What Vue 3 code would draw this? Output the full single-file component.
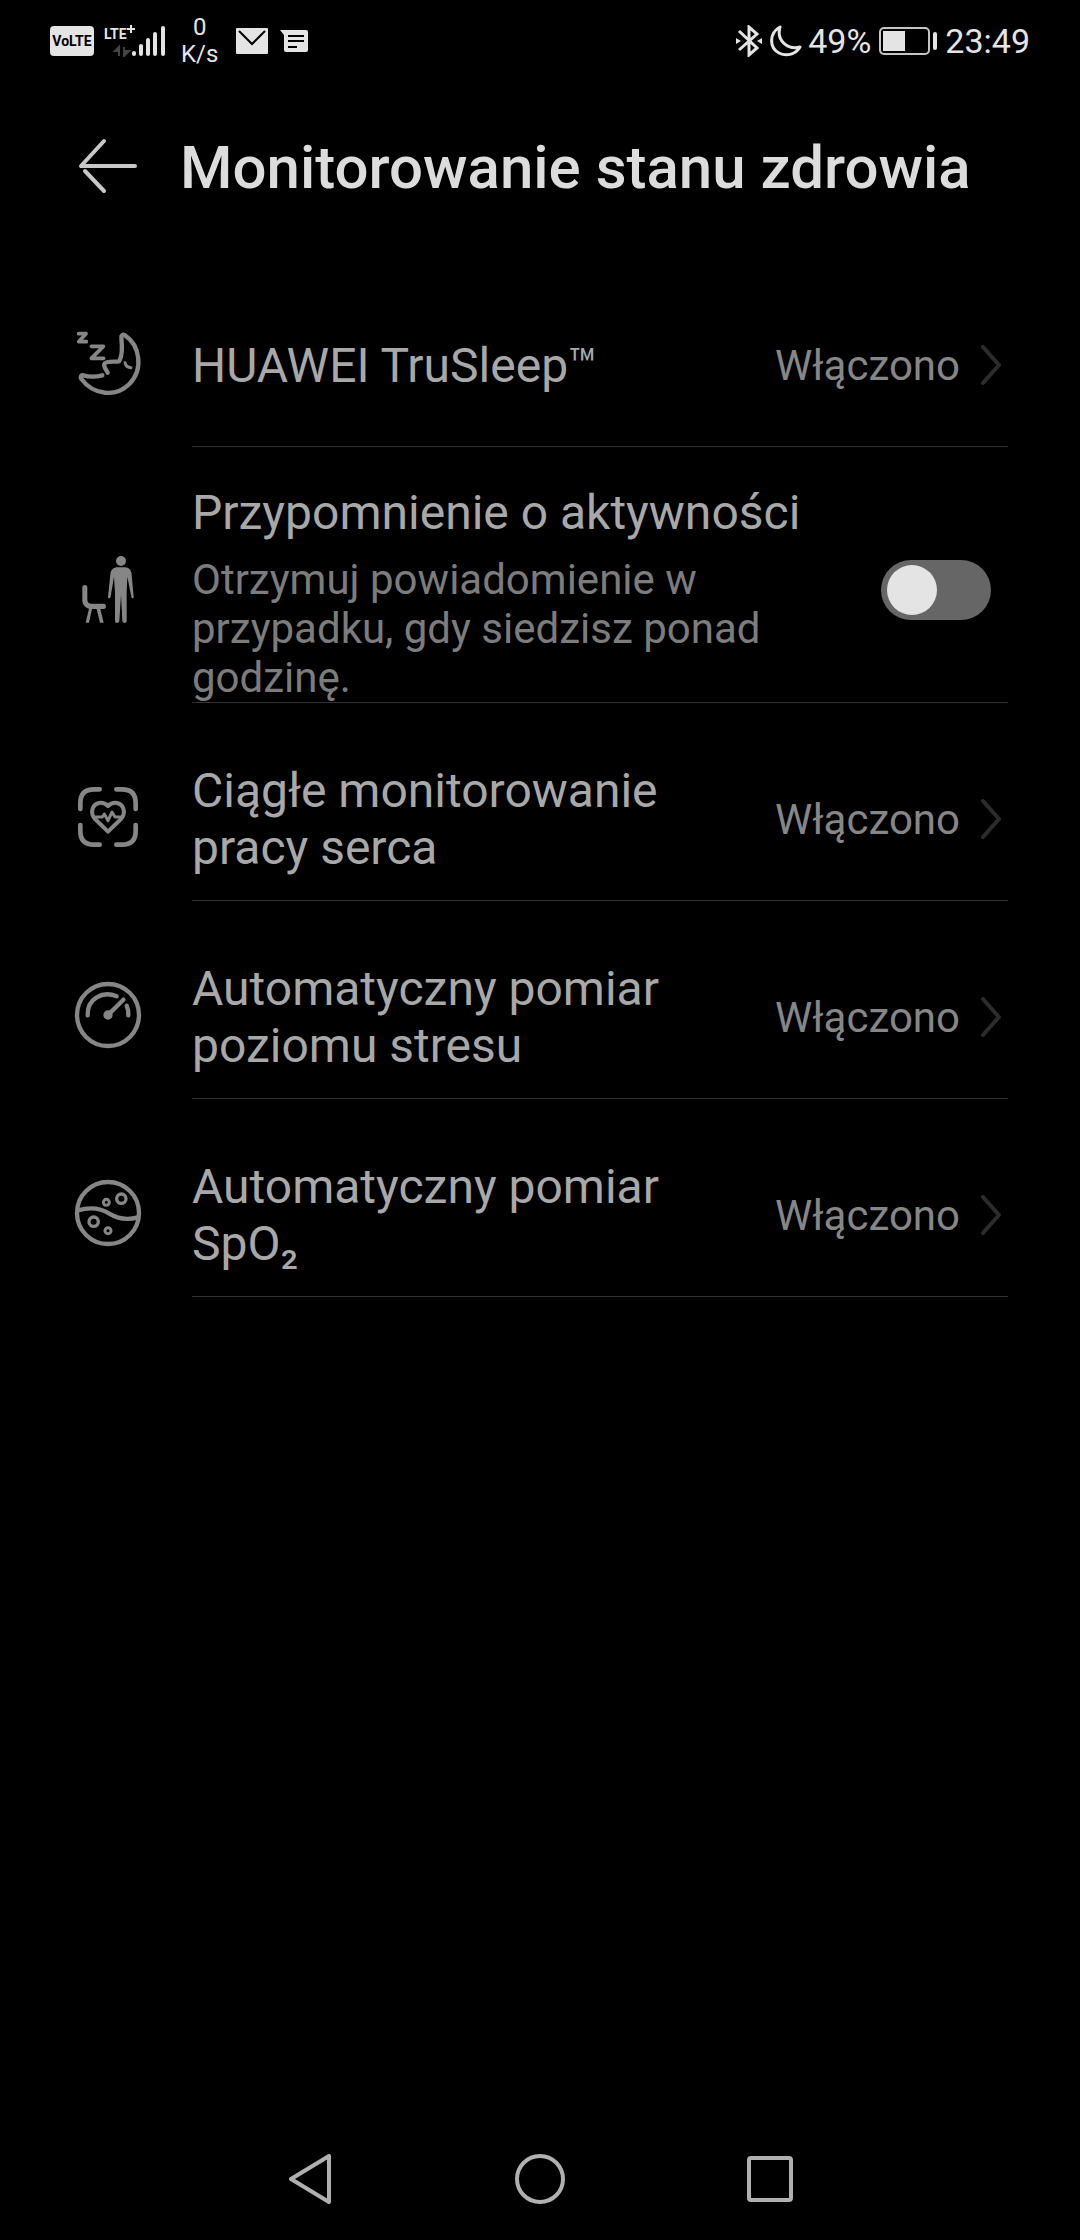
<script setup>
import { ref } from 'vue'

const activityReminder = ref(false)

const monitors = [
  { id: 'heart', title: 'Ciągłe monitorowanie pracy serca' },
  { id: 'stress', title: 'Automatyczny pomiar poziomu stresu' },
  { id: 'spo2', title: 'Automatyczny pomiar SpO₂' },
]
</script>

<template>
  <div class="screen">
    <div class="status">
      <div class="status-left">
        <span class="volte">VoLTE</span>
        <div class="signal">
          <span class="lte">LTE</span>
          <svg width="62" height="32" viewBox="0 0 62 32">
            <path d="M23 4h8M27 0v8" stroke="#e4e4e4" stroke-width="2" />
            <path d="M15 31V22l-4 4h4M20 22v9l5-5h-5" stroke="#444" stroke-width="2" fill="#444" />
            <path d="M30 28v1M37 21v8M44 15v14M51 9v20M59 3v26" stroke="#e4e4e4" stroke-width="4" stroke-linecap="round" />
          </svg>
        </div>
        <div class="speed"><span>0</span><span>K/s</span></div>
        <svg class="mail" width="32" height="26" viewBox="0 0 32 26">
          <rect width="32" height="26" rx="1" fill="#e4e4e4" />
          <path d="M3 3l13 13L29 3" fill="none" stroke="#000" stroke-width="2" />
        </svg>
        <svg width="28" height="22" viewBox="0 0 28 22">
          <path d="M0 0h26q2 0 2 2v18q0 2-2 2H6q-2 0-2-2V5z" fill="#e4e4e4" />
          <path d="M8 6h16M8 11h16M8 17h9" stroke="#000" stroke-width="2" />
        </svg>
      </div>
      <div class="status-right">
        <svg width="26" height="32" viewBox="0 0 26 32">
          <path d="M3 6l18 17-8 7V2l8 7L3 25" fill="none" stroke="#e4e4e4" stroke-width="3" />
          <path d="M0 13l5 3-5 3zM26 13l-5 3 5 3z" fill="#e4e4e4" />
        </svg>
        <svg class="moon" width="32" height="32" viewBox="0 0 32 32">
          <path d="M10 2C-1 8-1 23 9 28c8 4 17 1 21-6C18 25 6 16 10 2z" fill="none" stroke="#e4e4e4" stroke-width="3" stroke-linejoin="round" />
        </svg>
        <span>49%</span>
        <svg class="battery" width="58" height="28" viewBox="0 0 58 28">
          <rect x="1" y="1" width="49" height="26" rx="4" fill="none" stroke="#c4c4c4" stroke-width="2" />
          <rect x="4" y="4" width="22" height="20" fill="#e4e4e4" />
          <rect x="54" y="5" width="4" height="18" rx="2" fill="#e4e4e4" />
        </svg>
        <span>23:49</span>
      </div>
    </div>

    <header class="header">
      <button class="back" type="button" aria-label="Wstecz">
        <svg width="60" height="56" viewBox="0 0 60 56" fill="none" stroke="#c8c8c8" stroke-width="4" stroke-linecap="round">
          <path d="M26 3L3 28h54" stroke-linejoin="round" />
          <path d="M7 33l19 20" />
        </svg>
      </button>
      <h1>Monitorowanie stanu zdrowia</h1>
    </header>

    <main class="list">
      <button class="row" type="button">
        <svg class="icon" viewBox="36 24 216 216">
          <path d="M56 41h22L56 65h23M94 79h36L94 115h37" stroke-width="11" />
          <path d="M127 166Q96 174 70 166c-7-2-10 5-6 11 38 50 104 55 144 15 44-44 31-117-13-146-6-4-12 0-11 7 3 28 2 56-6 70-6 5-38-2-44 8-6 7 4 16 9 27" stroke-width="13" />
          <path d="M195 128c2 9 8 15 18 15" stroke-width="9" />
        </svg>
        <span class="body">
          <span class="title">HUAWEI TruSleep™</span>
          <span class="value">Włączono</span>
          <svg class="chevron" viewBox="0 0 20 40"><path d="M2 2l16 18L2 38" /></svg>
        </span>
      </button>

      <label class="row reminder">
        <svg class="icon solid" viewBox="36 42 216 216">
          <circle cx="183" cy="63" r="15" />
          <path d="M174 82h18c15 0 22 8 23 22l6 66c0 6-6 6-7 0l-12-60-2 48v85c0 8-12 8-13 0l-4-78-5 78c-1 8-13 8-13 0v-85l-3-48-10 60c-1 6-8 6-8 0l7-66c1-14 8-22 23-22z" />
          <path d="M67 142c0-9 15-9 15 0v38q1 11 12 11h37c9 0 9 16 0 16h-10l10 41h-11l-10-41H96l-9 41H77l10-42c-13-4-20-13-20-27z" />
        </svg>
        <span class="body">
          <span class="text">
            <span class="title">Przypomnienie o aktywności</span>
            <span class="desc">Otrzymuj powiadomienie w przypadku, gdy siedzisz ponad godzinę.</span>
          </span>
          <input v-model="activityReminder" class="switch" type="checkbox" role="switch" />
        </span>
      </label>

      <button v-for="item in monitors" :key="item.id" class="row" type="button">
        <svg v-if="item.id === 'heart'" class="icon" viewBox="36 36 216 216">
          <path d="M61 117V99q0-41 41-41h17M169 58h17q41 0 41 41v18M227 165v18q0 41-41 41h-17M119 224h-17q-41 0-41-41v-18" stroke-width="14" />
          <path d="M144 185L105 147c-15-17-10-43 12-48 12-2 21 3 27 9 6-6 15-11 27-9 22 5 27 31 12 48z" stroke-width="12" />
          <path d="M101 141h26l6-9 11 20 12-26 9 15h22" stroke-width="9" />
        </svg>
        <svg v-else-if="item.id === 'stress'" class="icon" viewBox="36 30 216 216">
          <circle cx="144" cy="135" r="93" stroke-width="13" />
          <path d="M83 136c-2-50 45-75 87-57M200 107q6 14 5 29" stroke-width="13" />
          <path d="M144 135l46-46" stroke-width="13" />
          <circle cx="144" cy="135" r="8" stroke-width="12" />
        </svg>
        <svg v-else class="icon" viewBox="36 24 216 216">
          <circle cx="144" cy="129" r="93" stroke-width="13" />
          <path d="M54 121c35-10 65-9 94 10 28 17 54 20 86 11" stroke-width="13" />
          <circle cx="184" cy="86" r="14" stroke-width="10" />
          <circle cx="139" cy="97" r="9" stroke-width="9" />
          <circle cx="101" cy="155" r="14" stroke-width="10" />
          <circle cx="144" cy="182" r="9" stroke-width="9" />
        </svg>
        <span class="body">
          <span class="title">{{ item.title }}</span>
          <span class="value">Włączono</span>
          <svg class="chevron" viewBox="0 0 20 40"><path d="M2 2l16 18L2 38" /></svg>
        </span>
      </button>
    </main>

    <nav class="nav">
      <button type="button" aria-label="Wstecz">
        <svg width="44" height="50" viewBox="0 0 44 50"><path d="M41 2v46L3 25z" /></svg>
      </button>
      <button type="button" aria-label="Ekran główny">
        <svg width="50" height="50" viewBox="0 0 50 50"><circle cx="25" cy="25" r="23" /></svg>
      </button>
      <button type="button" aria-label="Ostatnie">
        <svg width="46" height="46" viewBox="0 0 46 46"><rect x="2" y="2" width="42" height="42" rx="2" /></svg>
      </button>
    </nav>
  </div>
</template>

<style>
body {
  background: #000;
}
</style>

<style scoped>
.screen {
  display: flex;
  flex-direction: column;
  min-height: 100vh;
  background: #000;
  color: #a8a8a8;
  font-family: Roboto, sans-serif;
}

.screen * {
  box-sizing: border-box;
}

svg {
  display: block;
  flex: none;
}

button {
  padding: 0;
  border: 0;
  background: none;
  color: inherit;
  font: inherit;
  text-align: left;
}

.status {
  display: flex;
  justify-content: space-between;
  align-items: center;
  height: 82px;
  padding: 0 50px;
  color: #e4e4e4;
  font-size: 34px;
  line-height: 40px;
}

.status-left,
.status-right {
  display: flex;
  align-items: center;
}

.volte {
  width: 44px;
  border-radius: 4px;
  background: #e4e4e4;
  color: #000;
  font-family: "Liberation Sans Narrow", Roboto, sans-serif;
  font-size: 14px;
  font-weight: 700;
  line-height: 30px;
  text-align: center;
}

.signal {
  position: relative;
  margin-left: 10px;
}

.lte {
  position: absolute;
  top: 0;
  left: 0;
  font-family: "Liberation Sans Narrow", Roboto, sans-serif;
  font-size: 14px;
  font-weight: 700;
  line-height: 18px;
}

.speed {
  display: flex;
  flex-direction: column;
  align-items: center;
  margin: 0 18px 0 15px;
  font-size: 24px;
  line-height: 27px;
}

.mail {
  margin-right: 12px;
}

.moon {
  margin: 0 6px 0 8px;
}

.battery {
  margin: 0 8px;
}

.header {
  display: flex;
  align-items: center;
  gap: 42px;
  height: 167px;
  padding: 0 78px;
}

.back {
  flex: none;
}

h1 {
  margin: 0;
  padding-top: 4px;
  color: #dcdcdc;
  font-size: 60px;
  font-weight: 500;
  line-height: 72px;
}

.list {
  display: flex;
  flex-direction: column;
  padding: 0 72px;
}

.row {
  display: flex;
  align-items: stretch;
  gap: 48px;
  width: 100%;
  min-height: 198px;
}

.icon {
  width: 72px;
  height: 72px;
  margin-top: 79px;
  fill: none;
  stroke: #868686;
  stroke-linecap: round;
  stroke-linejoin: round;
}

.solid {
  fill: #868686;
  stroke: none;
}

.body {
  display: flex;
  flex: 1;
  align-items: center;
  padding: 59px 0 24px;
  border-bottom: 1px solid #333;
}

.title {
  flex: 1;
  font-size: 48px;
  line-height: 57px;
}

.value {
  margin: 0 21px 0 24px;
  color: #868686;
  font-size: 42px;
  line-height: 49px;
}

.chevron {
  width: 20px;
  height: 40px;
  margin-right: 7px;
  fill: none;
  stroke: #2c2c2c;
  stroke-width: 4;
  stroke-linecap: round;
  stroke-linejoin: round;
}

.reminder .icon {
  margin-top: 107px;
}

.reminder .body {
  padding: 37px 0 0;
}

.text {
  display: flex;
  flex: 1;
  flex-direction: column;
  gap: 14px;
}

.desc {
  max-width: 600px;
  color: #7c7c7c;
  font-size: 42px;
  line-height: 49px;
}

.switch {
  flex: none;
  width: 110px;
  height: 60px;
  margin: 0 17px 6px 0;
  padding: 5px 6px;
  border-radius: 30px;
  background: #666;
  appearance: none;
}

.switch::before {
  display: block;
  width: 50px;
  height: 50px;
  border-radius: 50%;
  background: #e4e4e4;
  content: "";
}

.switch:checked::before {
  margin-left: auto;
}

.nav {
  display: flex;
  justify-content: center;
  align-items: center;
  gap: 170px;
  height: 122px;
  margin-top: auto;
}

.nav button {
  display: flex;
  justify-content: center;
  width: 60px;
}

.nav svg {
  fill: none;
  stroke: #b0b0b0;
  stroke-width: 4;
  stroke-linejoin: round;
}
</style>
